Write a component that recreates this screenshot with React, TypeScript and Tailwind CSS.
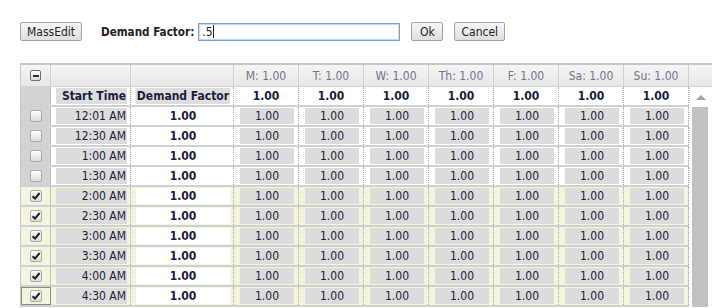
import React from "react";

const days = ["M", "T", "W", "Th", "F", "Sa", "Su"];
const times = [
  "12:01 AM",
  "12:30 AM",
  "1:00 AM",
  "1:30 AM",
  "2:00 AM",
  "2:30 AM",
  "3:00 AM",
  "3:30 AM",
  "4:00 AM",
  "4:30 AM",
];

const font = { fontFamily: '"DejaVu Sans Condensed", "DejaVu Sans", sans-serif' };

function Check({ checked }: { checked: boolean }) {
  return (
    <span className="w-[12px] h-[12px] rounded-[2px] border border-[#a9a9a9] bg-linear-to-b from-white to-[#dcdcdc] flex items-center justify-center">
      {checked && (
        <svg width="10" height="10" viewBox="0 0 10 10">
          <path d="M1.6 5.2 L4 7.6 L8.6 2" fill="none" stroke="#1e1e1e" strokeWidth="2" />
        </svg>
      )}
    </span>
  );
}

function Btn({ children, className = "" }: { children: React.ReactNode; className?: string }) {
  return (
    <button
      className={`h-[19px] px-[6px] border border-[#a3a3a3] rounded-[2px] bg-linear-to-b from-[#f7f7f7] to-[#dedede] text-[12px] text-[#222] leading-none ${className}`}
    >
      {children}
    </button>
  );
}

export default function App() {
  return (
    <div className="w-[712px] h-[308px] overflow-hidden bg-white text-[#1b1b3a] text-[12px] leading-[16px]" style={font}>
      <div className="flex items-center h-[19px] mt-[22px] pl-[20px]">
        <Btn className="w-[62px]">MassEdit</Btn>
        <span className="ml-[19px] font-bold text-[#222] text-[11.6px]">Demand Factor:</span>
        <div className="ml-[4px] w-[202px] h-[18px] border border-[#7da2ce] shadow-[inset_0_0_0_1px_#c5d7ef] flex items-center px-[3px] text-[#222]">
          .5<span className="w-px h-[13px] bg-[#222]" />
        </div>
        <Btn className="ml-[11px] w-[32px]">Ok</Btn>
        <Btn className="ml-[11px] w-[51px]">Cancel</Btn>
      </div>

      <div className="mt-[22px] ml-[20px] border-l border-t-2 border-[#c6c6c6]">
        {/* header */}
        <div className="grid grid-cols-[30px_80px_103px_repeat(7,65px)_23px] h-[22px] bg-linear-to-b from-[#f5f5f5] to-[#e7e7e7] border-b border-[#d2d2d2] text-[#72728f]">
          <div className="flex items-center justify-center border-r border-[#cfcfcf]">
            <span className="w-[11px] h-[11px] rounded-[2px] border border-[#6f6f6f] bg-linear-to-b from-white to-[#dadada] flex items-center justify-center">
              <span className="w-[6px] h-[2px] bg-[#2f2f2f]" />
            </span>
          </div>
          <div className="border-r border-[#cfcfcf]" />
          <div className="border-r border-[#cfcfcf]" />
          {days.map((d) => (
            <div key={d} className="flex items-center justify-center border-r border-[#cfcfcf]">
              {d}: 1.00
            </div>
          ))}
          <div />
        </div>

        <div className="flex">
          <div>
            {/* bold row */}
            <div className="grid grid-cols-[30px_80px_103px_repeat(7,65px)] h-[20px] border-b-2 border-[#d0d0d0] bg-white font-bold">
              <div className="bg-[#d3d3d3] border-r border-[#c0c0c0]" />
              <div className="border-r border-dotted border-[#a8a8a8] pl-[5px] pr-[3px] py-[1px]">
                <div className="h-full bg-[#dedede] text-right pr-[1px]">Start Time</div>
              </div>
              <div className="border-r border-dotted border-[#a8a8a8] pl-[5px] pr-[3px] py-[1px]">
                <div className="h-full bg-[#dedede] text-center">Demand Factor</div>
              </div>
              {days.map((d) => (
                <div key={d} className="border-r border-dotted border-[#a8a8a8] text-center leading-[18px]">
                  1.00
                </div>
              ))}
            </div>

            {times.map((t, i) => {
              const checked = i >= 4;
              return (
                <div
                  key={t}
                  className={`grid grid-cols-[30px_80px_103px_repeat(7,65px)] h-[20px] border-b-2 border-[#d0d0d0] ${
                    checked ? "bg-[#f5f5df]" : "bg-white"
                  }`}
                >
                  <div
                    className={`flex items-center justify-center border-r border-[#c0c0c0] ${
                      checked ? "" : "bg-[#d3d3d3]"
                    } ${i === 9 ? "outline outline-[#8a8a8a] -outline-offset-1" : ""}`}
                  >
                    <Check checked={checked} />
                  </div>
                  <div className="border-r border-dotted border-[#a8a8a8] pl-[5px] pr-[3px] py-[1px]">
                    <div className="h-full bg-[#dcdcdc] text-right pr-[1px]">{t}</div>
                  </div>
                  <div className="border-r border-dotted border-[#a8a8a8] pl-[5px] pr-[3px] py-[1px]">
                    <div className="h-full bg-white text-center font-bold">1.00</div>
                  </div>
                  {days.map((d) => (
                    <div key={d} className="border-r border-dotted border-[#a8a8a8] pl-[6px] pr-[4px] py-[1px]">
                      <div className="h-full bg-[#dcdcdc] text-center">1.00</div>
                    </div>
                  ))}
                </div>
              );
            })}
          </div>

          {/* scrollbar */}
          <div className="w-[23px] flex flex-col bg-white">
            <div className="h-[20px] flex items-center justify-center pl-[1px]">
              <svg width="10" height="6" viewBox="0 0 10 6">
                <path d="M0 6 L5 1 L10 6 Z" fill="#a3a3a3" />
              </svg>
            </div>
            <div className="flex-1 ml-[3px] mr-[4px] bg-[#c2c2c2]" />
          </div>
        </div>
      </div>
    </div>
  );
}
